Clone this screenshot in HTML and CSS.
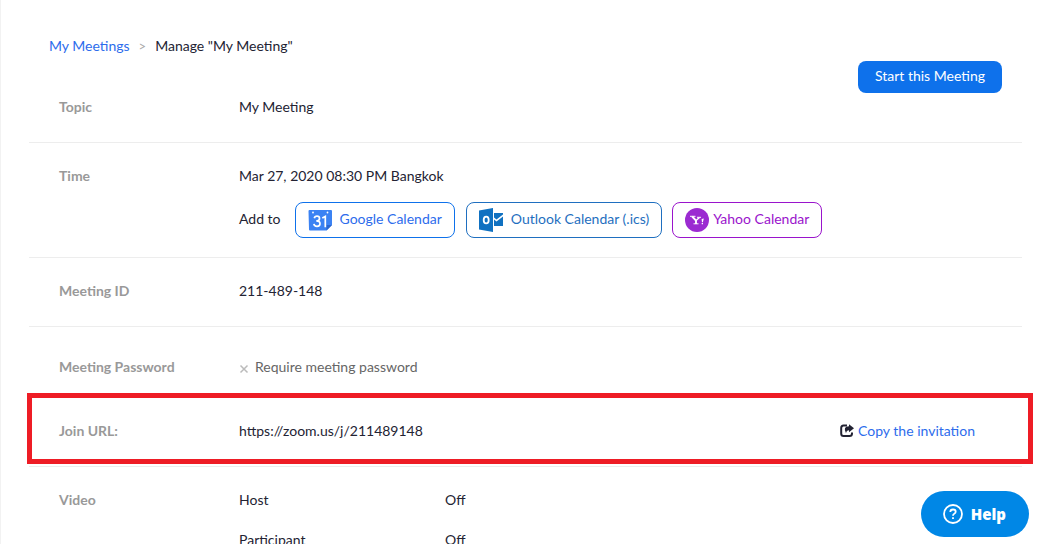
FILE: index.html
```html
<!DOCTYPE html>
<html lang="en">
<head>
<meta charset="utf-8">
<title>My Meeting</title>
<link rel="stylesheet" href="styles.css">
</head>
<body>
<main class="page">
  <header class="header">
    <nav class="breadcrumb" aria-label="Breadcrumb">
      <a class="link" href="#">My Meetings</a>
      <span class="separator">&gt;</span>
      <span>Manage "My Meeting"</span>
    </nav>
    <button class="start" type="button">Start this Meeting</button>
  </header>

  <section class="row">
    <div class="label">Topic</div>
    <div class="value">My Meeting</div>
  </section>

  <section class="row row-time">
    <div class="label">Time</div>
    <div class="value">
      <div>Mar 27, 2020 08:30 PM Bangkok</div>
      <div class="calendars">
        <span class="add-to">Add to</span>
        <a class="calendar google" href="#">
          <svg class="calendar-icon" viewBox="0 0 24 24" aria-hidden="true">
            <path fill="#3b82f3" d="M0.500 3Q0.500 2 1.500 2H23Q24 2 24 3V17L18.500 22.500H2Q1 22.500 1 21.500Z"/>
            <path fill="#2a66d0" d="M24 17L18.500 22.500V17Z"/>
            <circle cx="5" cy="4.500" r="0.900" fill="#fff"/><circle cx="19.500" cy="4.500" r="0.900" fill="#fff"/>
            <path fill="none" stroke="#fff" stroke-width="1.700" d="M6.300 10.200Q6.800 8.200 9 8.200Q11.500 8.200 11.500 10.500Q11.500 12.900 8.300 12.900Q12 12.900 12 15.700Q12 18.300 9 18.300Q6.200 18.300 5.900 15.900M14.300 10L17.300 8.400V19.200"/>
          </svg>
          <span>Google Calendar</span>
        </a>
        <a class="calendar outlook" href="#">
          <svg class="calendar-icon" viewBox="0 0 24 24" aria-hidden="true">
            <path fill="#1071c1" d="M0 2.500L14 0V24L0 21.500ZM15 5H24V6.500L17.500 11.500L15 9.500ZM15 11.500L17.500 13.500L24 8.500V18H15Z"/>
            <ellipse cx="7.200" cy="12" rx="2.500" ry="3.400" fill="none" stroke="#fff" stroke-width="1.800"/>
          </svg>
          <span>Outlook Calendar (.ics)</span>
        </a>
        <a class="calendar yahoo" href="#">
          <svg class="calendar-icon" viewBox="0 0 24 24" aria-hidden="true">
            <circle cx="12" cy="12" r="12" fill="#9b2bd1"/>
            <path fill="none" stroke="#fff" stroke-width="1" d="M5 8.300H10.500M12 9.300H16M8.500 15.800H13.500"/>
            <path fill="none" stroke="#fff" stroke-width="1.900" d="M7.200 8.500L11 12.600V16"/>
            <path fill="none" stroke="#fff" stroke-width="1.300" d="M11 12.600L14.500 9.500"/>
            <path fill="#fff" d="M16.600 11L18.800 10.600L17.900 14.200H17ZM16.700 15H18V16.200H16.700Z"/>
          </svg>
          <span>Yahoo Calendar</span>
        </a>
      </div>
    </div>
  </section>

  <section class="row">
    <div class="label">Meeting ID</div>
    <div class="value">211-489-148</div>
  </section>

  <section class="row row-password">
    <div class="label">Meeting Password</div>
    <div class="value muted">
      <svg class="cross" viewBox="0 0 10 10" aria-hidden="true"><path d="M1.500 1.500L8.500 8.500M8.500 1.500L1.500 8.500"/></svg>
      <span>Require meeting password</span>
    </div>
  </section>

  <section class="row row-join">
    <div class="label">Join URL:</div>
    <div class="value">https://zoom.us/j/211489148</div>
    <a class="link copy" href="#">
      <svg class="share" viewBox="0 0 14 14" aria-hidden="true">
        <path fill="none" stroke="#232333" stroke-width="2" d="M7 1.500H3.500Q1.200 1.500 1.200 4V9.500Q1.200 12 3.500 12H9.500Q12 12 12 9.500V8.500"/>
        <path fill="#232333" d="M9 0.300L14 4.300L9 8.300V6.300Q6.500 6.300 6 9.200Q2.500 2.500 9 2.300Z"/>
      </svg>
      <span>Copy the invitation</span>
    </a>
  </section>

  <section class="row row-video">
    <div class="label">Video</div>
    <dl class="settings">
      <dt>Host</dt><dd>Off</dd>
      <dt>Participant</dt><dd>Off</dd>
    </dl>
  </section>
</main>

<button class="help" type="button">
  <svg class="help-icon" viewBox="0 0 20 20" aria-hidden="true">
    <circle cx="10" cy="10" r="9"/>
    <path d="M7.300 8Q7.300 5.500 10 5.500Q12.700 5.500 12.700 7.700Q12.700 8.900 11.200 9.700Q10 10.300 10 11.700"/>
    <path d="M10 13.200V15"/>
  </svg>
  <span>Help</span>
</button>
</body>
</html>
```
FILE: styles.css
```css
* {
  box-sizing: border-box;
}

body {
  margin: 0;
  background: #fff;
  color: #232333;
  font-family: Lato, "Liberation Sans", sans-serif;
  font-size: 14px;
  line-height: 20px;
}

button {
  border: 0;
  font-family: inherit;
  cursor: pointer;
}

.page {
  height: 100vh;
  overflow: hidden;
  padding: 36px 21px 0 28px;
  border-left: 1px solid #f2f2f2;
}

.link {
  color: #2d6cec;
  text-decoration: none;
}

.header {
  display: flex;
  justify-content: space-between;
  align-items: flex-start;
  padding: 0 20px;
}

.breadcrumb {
  display: flex;
  gap: 9px;
}

.separator {
  color: #aaa;
  font-size: 13px;
}

.start {
  height: 32px;
  margin: 25px 0 -19px;
  padding: 0 17px 3px;
  border-radius: 8px;
  background: #0e71eb;
  color: #fff;
  font-size: 14px;
}

.row {
  display: flex;
  padding: 23px 0 25px 30px;
  border-bottom: 1px solid #ededed;
}

.label {
  flex: 0 0 180px;
  color: #999;
  font-weight: 700;
}

.value {
  flex: 1;
}

.row-time {
  padding-bottom: 19px;
}

.calendars {
  display: flex;
  align-items: center;
  margin-top: 16px;
}

.add-to {
  margin-right: 14px;
  padding-bottom: 2px;
}

.calendar {
  display: flex;
  align-items: center;
  height: 36px;
  margin-right: 11px;
  padding: 0 12px;
  border: 1px solid;
  border-radius: 8px;
  text-decoration: none;
}

.calendar span {
  padding-bottom: 2px;
}

.calendar-icon {
  width: 24px;
  height: 24px;
  margin-right: 8px;
}

.google {
  color: #2d6cec;
  border-color: #0e71eb;
}

.outlook {
  margin-right: 10px;
  color: #1f6fc0;
}

.yahoo {
  color: #9a14cc;
}

.yahoo .calendar-icon {
  margin-right: 4px;
}

.row-password {
  padding: 30px 0 20px 30px;
}

.muted {
  display: flex;
  align-items: center;
  gap: 6px;
  color: #666;
}

.cross {
  width: 10px;
  height: 10px;
  margin-top: 4px;
  fill: none;
  stroke: #bbb;
  stroke-width: 1.5;
}

.row-join {
  position: relative;
  padding-right: 47px;
}

.row-join::after {
  content: "";
  position: absolute;
  inset: -5px -11px 2px -2px;
  border: 5px solid #ee1c25;
  pointer-events: none;
}

.copy {
  display: flex;
  align-items: center;
  gap: 4px;
}

.share {
  width: 14px;
  height: 14px;
}

.settings {
  display: grid;
  grid-template-columns: 206px auto;
  row-gap: 20px;
  margin: 0;
}

.settings dd {
  margin: 0;
}

.help {
  position: fixed;
  right: 14px;
  bottom: 7px;
  display: flex;
  align-items: center;
  gap: 8px;
  height: 46px;
  padding: 0 23px 0 22px;
  border-radius: 23px;
  background: #0087e6;
  color: #fff;
  font: 800 15px/20px "Open Sans", "Noto Sans", sans-serif;
}

.help-icon {
  width: 20px;
  height: 20px;
  fill: none;
  stroke: #fff;
  stroke-width: 1.8;
}
```
